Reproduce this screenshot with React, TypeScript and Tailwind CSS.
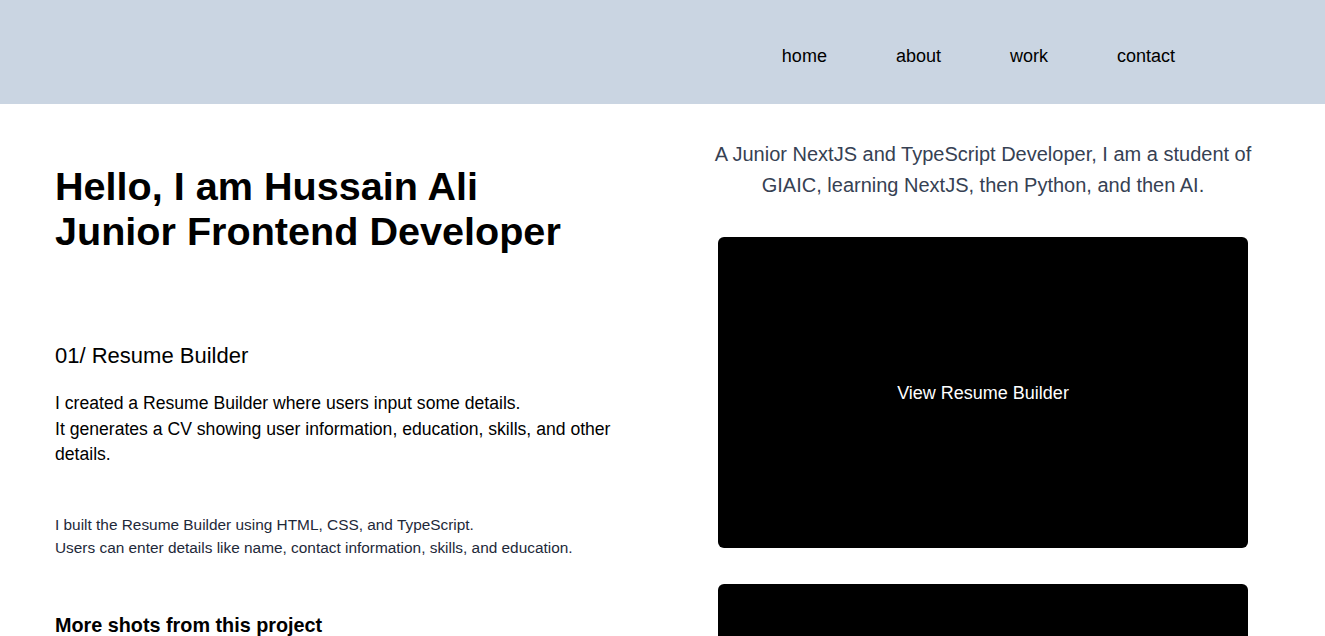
import React from "react";

const links = ["home", "about", "work", "contact"];

const ProjectShot = (props: { label?: string }) => {
  return (
    <div className="w-full h-[311px] bg-black rounded-md flex items-center justify-center">
      {props.label && <span className="text-white text-lg">{props.label}</span>}
    </div>
  );
};

const App = () => {
  return (
    <div className="min-h-screen bg-white text-black font-['Liberation_Sans',Arial,sans-serif]">
      <header className="h-[104px] bg-slate-300 flex items-center justify-end pr-[150px] pt-2">
        <nav className="flex gap-[69px] text-lg">
          {links.map((link) => (
            <a key={link} href="#" className="text-black">
              {link}
            </a>
          ))}
        </nav>
      </header>

      <main className="flex pl-[55px]">
        <div className="w-[580px] flex flex-col">
          <h1 className="mt-[60px] text-[39.6px] leading-[45px] font-bold">
            Hello, I am Hussain Ali
            <br />
            Junior Frontend Developer
          </h1>
          <h2 className="mt-[87px] text-[22px] leading-[30px]">01/ Resume Builder</h2>
          <p className="mt-[20px] text-[17.6px] leading-[25.5px]">
            I created a Resume Builder where users input some details.
            <br />
            It generates a CV showing user information, education, skills, and other details.
          </p>
          <p className="mt-[45px] text-[15.4px] leading-[23px] text-gray-800">
            I built the Resume Builder using HTML, CSS, and TypeScript.
            <br />
            Users can enter details like name, contact information, skills, and education.
          </p>
          <h3 className="mt-[52px] text-[19.8px] leading-7 font-bold">More shots from this project</h3>
        </div>

        <div className="w-[530px] ml-[83px] flex flex-col">
          <p className="mt-[35px] -mx-5 text-center text-xl leading-[31px] text-gray-700">
            A Junior NextJS and TypeScript Developer, I am a student of GIAIC, learning NextJS,
            then Python, and then AI.
          </p>
          <div className="mt-[36px]">
            <ProjectShot label="View Resume Builder" />
          </div>
          <div className="mt-[36px]">
            <ProjectShot />
          </div>
        </div>
      </main>
    </div>
  );
};

export default App;
